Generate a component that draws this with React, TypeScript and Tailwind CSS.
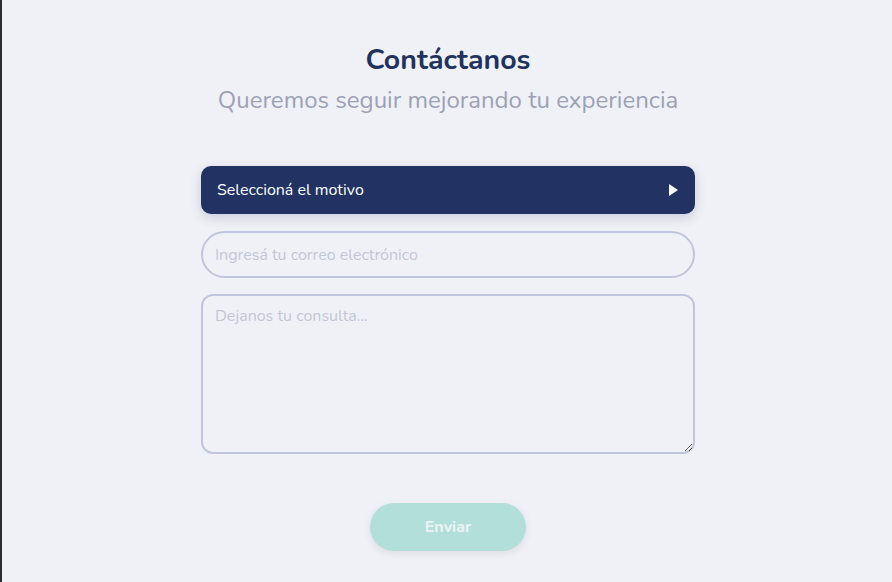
export default function App() {
  return (
    <div
      className="min-h-[582px] w-full bg-[#f0f1f6] border-l-2 border-[#2b2b30] pl-[2px] flex flex-col items-center"
      style={{ fontFamily: "Nunito, Lato, 'Noto Sans', sans-serif" }}
    >
      <h1 className="mt-[41px] text-[28.5px] leading-[38px] font-bold text-[#21325e]">Contáctanos</h1>
      <p className="mt-[5px] text-[24px] leading-[32px] text-[#9da1b6]">Queremos seguir mejorando tu experiencia</p>

      <form className="mt-[50px] w-[494px] flex flex-col">
        <button
          type="button"
          className="h-[48px] w-full rounded-[10px] bg-[#213263] px-4 flex items-center justify-between text-white text-[16px] shadow-[0_4px_12px_rgba(33,50,99,0.18)]"
        >
          <span>Seleccioná el motivo</span>
          <svg width="11" height="14" viewBox="0 0 11 14">
            <path d="M1 1 L10 7 L1 13 Z" fill="white" />
          </svg>
        </button>

        <input
          type="email"
          placeholder="Ingresá tu correo electrónico"
          className="mt-[17px] h-[47px] w-full rounded-full border-2 border-[#c0c5dd] bg-transparent px-[12px] text-[16px] text-[#21325e] placeholder:text-[#c3c6d6] outline-none"
        />

        <textarea
          placeholder="Dejanos tu consulta..."
          className="mt-[16px] h-[160px] w-full rounded-[12px] border-2 border-[#c0c5dd] bg-transparent px-[12px] py-[8px] text-[16px] text-[#21325e] placeholder:text-[#c3c6d6] outline-none"
        />

        <button
          type="button"
          className="mt-[49px] self-center h-[48px] w-[156px] rounded-full bg-[#b3dfdb] text-[16px] font-bold text-[#eef4f6] shadow-[0_3px_8px_rgba(0,0,0,0.08)]"
        >
          Enviar
        </button>
      </form>
    </div>
  );
}
